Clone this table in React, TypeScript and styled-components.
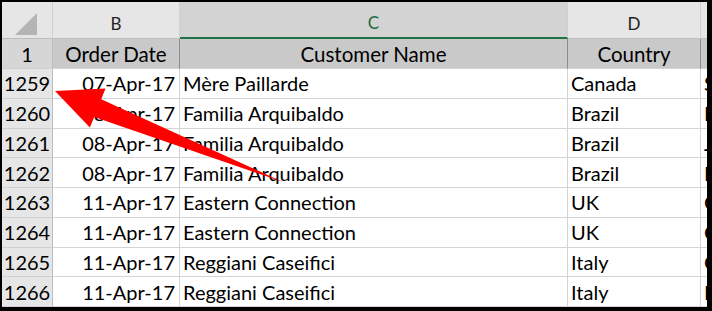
import React from "react";
import styled, { createGlobalStyle, css } from "styled-components";

const Global = createGlobalStyle`
  html, body { margin: 0; padding: 0; background: #000; }
  body { font-family: "Lato", "Noto Sans", sans-serif; }
`;

const Frame = styled.div`
  position: relative;
  width: 712px;
  height: 311px;
  box-sizing: border-box;
  border-style: solid;
  border-color: #000;
  border-width: 2px 5px 4px 2px;
  background: #fff;
  overflow: hidden;
`;

const Sheet = styled.div`
  display: grid;
  grid-template-columns: 51px 127px 388px 133px 140px;
  grid-template-rows: 37px 30px repeat(8, 29.75px);
  font-family: "Lato", "Noto Sans", sans-serif;
  color: #000;
`;

const cellBase = css`
  box-sizing: border-box;
  display: flex;
  align-items: center;
  overflow: hidden;
  white-space: nowrap;
`;

const Corner = styled.div`
  ${cellBase};
  position: relative;
  background: #e6e6e6;
  border-right: 1px solid #cfcfcf;
  border-bottom: 1px solid #bdbdbd;
`;

const SelectAll = styled.div`
  position: absolute;
  left: 13px;
  top: 11px;
  width: 22px;
  height: 22px;
  background: #b4b4b4;
  clip-path: polygon(100% 0, 100% 100%, 0 100%);
`;

const ColLetter = styled.div<{ $selected?: boolean }>`
  ${cellBase};
  justify-content: center;
  align-items: flex-end;
  padding-bottom: 4px;
  font-size: 17px;
  background: ${(p) => (p.$selected ? "#d3d3d3" : "#e6e6e6")};
  color: ${(p) => (p.$selected ? "#1d6b40" : "#222")};
  border-right: 1px solid #d0d0d0;
  border-bottom: ${(p) => (p.$selected ? "2px solid #217346" : "1px solid #bdbdbd")};
`;

const RowHead = styled.div<{ $title?: boolean }>`
  ${cellBase};
  justify-content: center;
  font-size: 20px;
  background: ${(p) => (p.$title ? "#d6d6d6" : "#e6e6e6")};
  border-right: 1px solid #bdbdbd;
  border-bottom: 1px solid #cfcfcf;
`;

const HeadCell = styled.div`
  ${cellBase};
  justify-content: center;
  font-size: 20.5px;
  background: #c9c9c9;
  border-right: 1px solid #8c8c8c;
  border-bottom: 1px solid #d4d4d4;
`;

const Cell = styled.div<{ $align?: "left" | "right" }>`
  ${cellBase};
  justify-content: ${(p) => (p.$align === "right" ? "flex-end" : "flex-start")};
  padding: ${(p) => (p.$align === "right" ? "0 4px 0 0" : "0 0 0 3px")};
  font-size: 20px;
  background: #fff;
  border-right: 1px solid #d4d4d4;
  border-bottom: 1px solid #d4d4d4;
`;

const ArrowLayer = styled.svg`
  position: absolute;
  left: -2px;
  top: -2px;
  width: 712px;
  height: 311px;
  pointer-events: none;
`;

type Row = { n: number; date: string; name: string; country: string; e: string };

const rows: Row[] = [
  { n: 1259, date: "07-Apr-17", name: "Mère Paillarde", country: "Canada", e: "S" },
  { n: 1260, date: "08-Apr-17", name: "Familia Arquibaldo", country: "Brazil", e: "F" },
  { n: 1261, date: "08-Apr-17", name: "Familia Arquibaldo", country: "Brazil", e: "J" },
  { n: 1262, date: "08-Apr-17", name: "Familia Arquibaldo", country: "Brazil", e: "F" },
  { n: 1263, date: "11-Apr-17", name: "Eastern Connection", country: "UK", e: "C" },
  { n: 1264, date: "11-Apr-17", name: "Eastern Connection", country: "UK", e: "C" },
  { n: 1265, date: "11-Apr-17", name: "Reggiani Caseifici", country: "Italy", e: "C" },
  { n: 1266, date: "11-Apr-17", name: "Reggiani Caseifici", country: "Italy", e: "F" },
];

// Callout arrow: triangular head at the tip, shaft tapering to a point at the tail.
function Callout() {
  const tip = { x: 55, y: 91 };
  const tail = { x: 283, y: 182 };
  const dx = tail.x - tip.x;
  const dy = tail.y - tip.y;
  const len = Math.hypot(dx, dy);
  const ux = dx / len;
  const uy = dy / len;
  const px = -uy;
  const py = ux;
  const headLen = 46;
  const headHalf = 21;
  const shaftHalf = 9.5;
  const bx = tip.x + ux * headLen;
  const by = tip.y + uy * headLen;
  const pts = [
    [tip.x, tip.y],
    [bx - px * headHalf, by - py * headHalf],
    [bx - px * shaftHalf, by - py * shaftHalf],
    [tail.x, tail.y],
    [bx + px * shaftHalf, by + py * shaftHalf],
    [bx + px * headHalf, by + py * headHalf],
  ]
    .map(([x, y]) => `${x.toFixed(1)},${y.toFixed(1)}`)
    .join(" ");
  return (
    <ArrowLayer viewBox="0 0 712 311">
      <polygon points={pts} fill="#ff0000" />
    </ArrowLayer>
  );
}

export default function App() {
  return (
    <>
      <Global />
      <Frame>
        <Sheet>
          <Corner>
            <SelectAll />
          </Corner>
          <ColLetter>B</ColLetter>
          <ColLetter $selected>C</ColLetter>
          <ColLetter>D</ColLetter>
          <ColLetter>E</ColLetter>

          <RowHead $title>1</RowHead>
          <HeadCell>Order Date</HeadCell>
          <HeadCell>Customer Name</HeadCell>
          <HeadCell>Country</HeadCell>
          <HeadCell>City</HeadCell>

          {rows.map((r) => (
            <React.Fragment key={r.n}>
              <RowHead>{r.n}</RowHead>
              <Cell $align="right">{r.date}</Cell>
              <Cell>{r.name}</Cell>
              <Cell>{r.country}</Cell>
              <Cell>{r.e}</Cell>
            </React.Fragment>
          ))}
        </Sheet>
        <Callout />
      </Frame>
    </>
  );
}
